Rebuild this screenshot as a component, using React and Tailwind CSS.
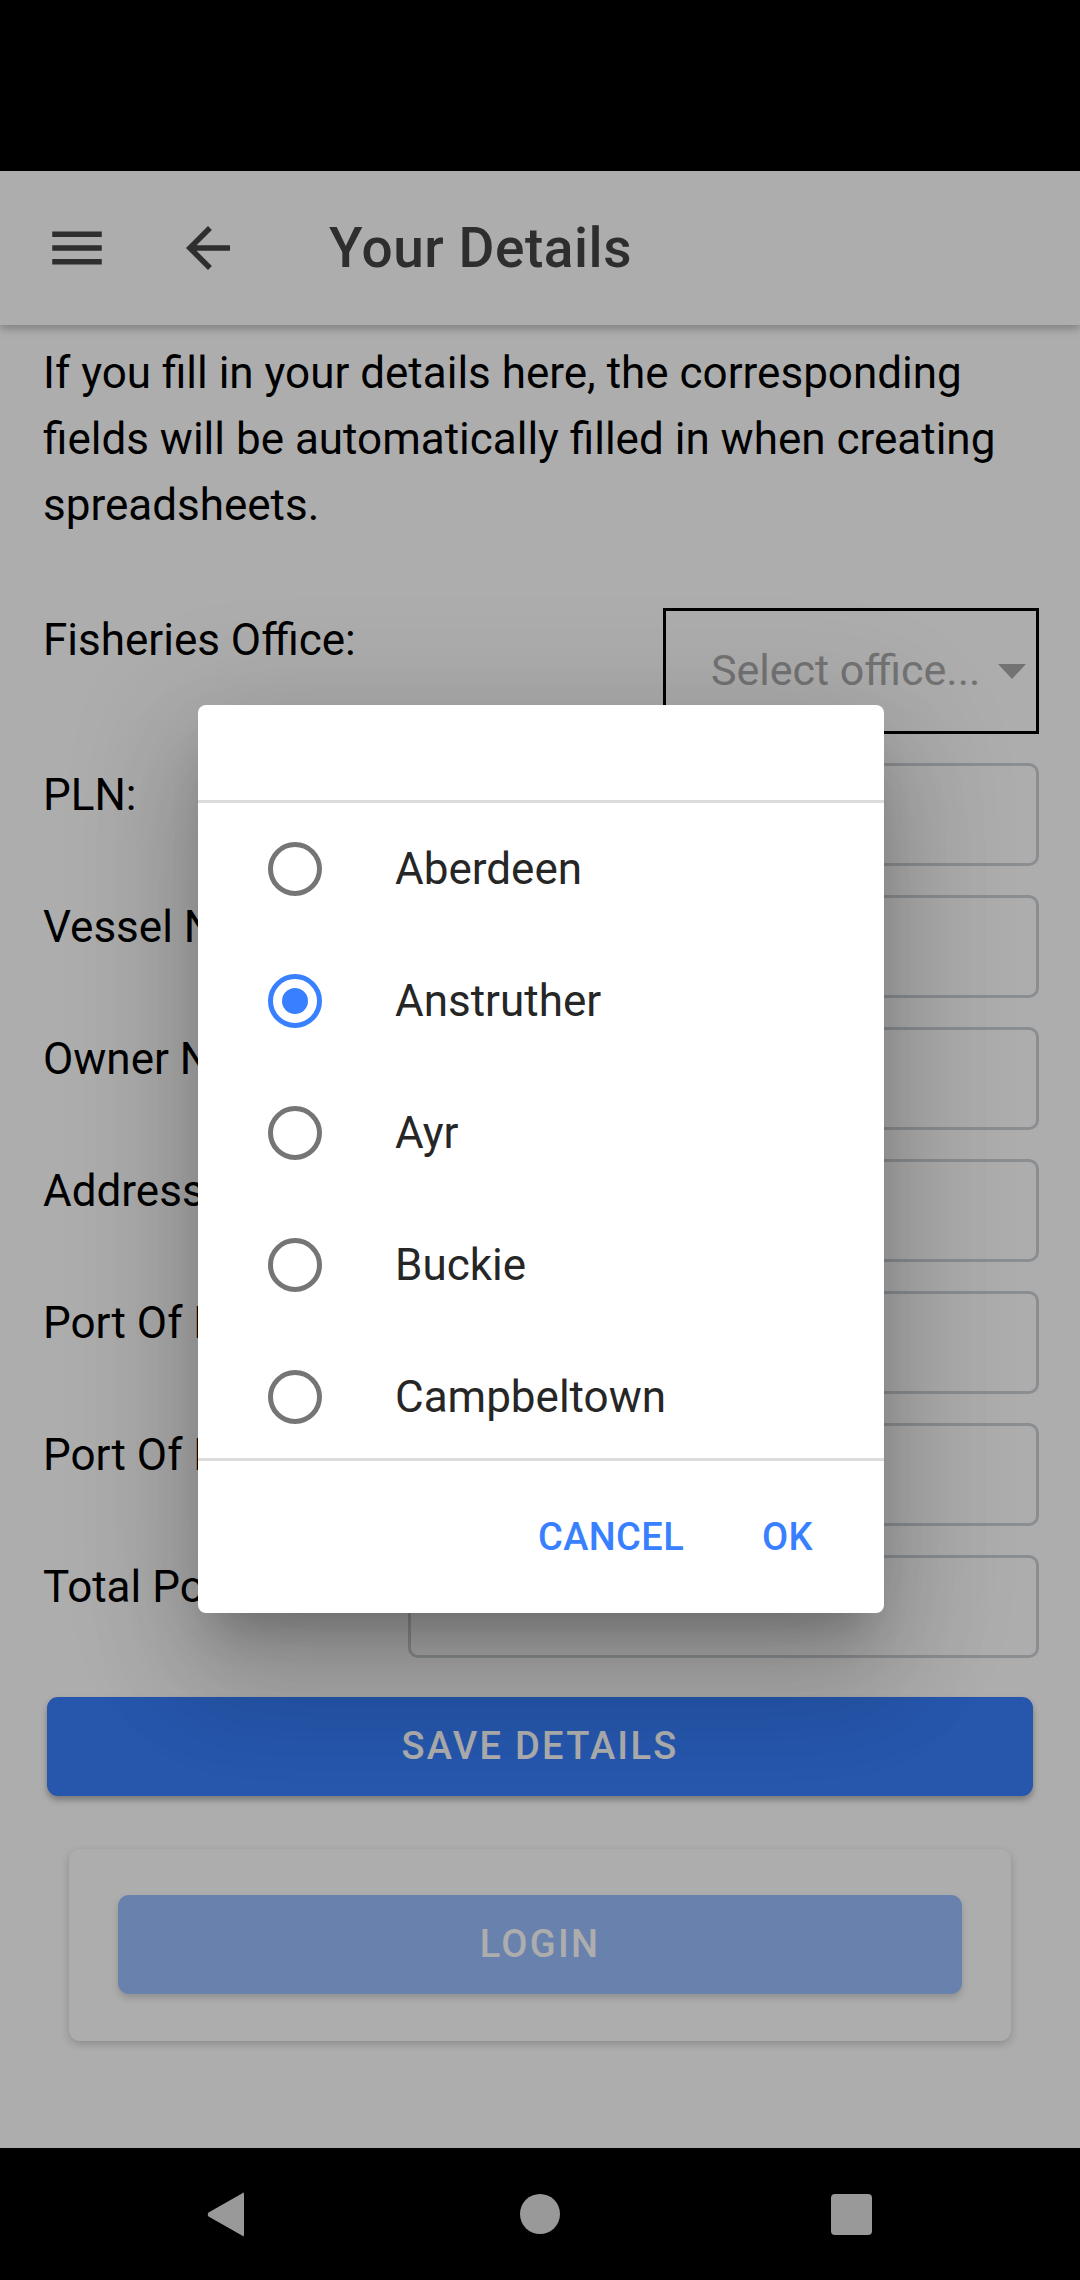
import React from 'react';

const offices = [
    { name: 'Aberdeen', checked: false },
    { name: 'Anstruther', checked: true },
    { name: 'Ayr', checked: false },
    { name: 'Buckie', checked: false },
    { name: 'Campbeltown', checked: false },
    { name: 'Eyemouth', checked: false },
];

const fields = ['PLN:', 'Vessel Name:', 'Owner Name:', 'Address:', 'Port Of Registry:', 'Port Of Landing:', 'Total Pots:'];

const Radio = ({ checked }) => {
    if (checked) {
        return (
            <span className="w-[54px] h-[54px] shrink-0 rounded-full border-[5px] border-[#3880ff] flex items-center justify-center">
                <span className="w-[26px] h-[26px] rounded-full bg-[#3880ff]" />
            </span>
        );
    }
    return <span className="w-[54px] h-[54px] shrink-0 rounded-full border-[5px] border-[#757575]" />;
};

const App = () => {
    return (
        <div className="relative w-[1080px] h-[2280px] overflow-hidden flex flex-col bg-white font-[Roboto,sans-serif]">
            {/* Status bar */}
            <div className="h-[171px] shrink-0 bg-black" />

            {/* Toolbar */}
            <header className="h-[154px] shrink-0 flex items-center pl-[44px] bg-white text-[#444] shadow-[0_4px_8px_rgba(0,0,0,0.25)] relative z-10">
                <svg viewBox="0 0 24 24" className="w-[66px] h-[66px]" fill="currentColor">
                    <path d="M3 18h18v-2H3v2zm0-5h18v-2H3v2zm0-7v2h18V6H3z" />
                </svg>
                <svg viewBox="0 0 24 24" className="w-[66px] h-[66px] ml-[65px]" fill="currentColor">
                    <path d="M20 11H7.83l5.59-5.59L12 4l-8 8 8 8 1.41-1.41L7.83 13H20v-2z" />
                </svg>
                <h1 className="ml-[88px] text-[55px] font-medium tracking-[0.01em]">Your Details</h1>
            </header>

            {/* Content */}
            <main className="flex-1 pl-[43px] pr-[41px] pt-[15px] text-black">
                <p className="text-[44px] leading-[66px] pr-[2px]">
                    If you fill in your details here, the corresponding fields will be automatically filled in when creating spreadsheets.
                </p>

                <div className="mt-[70px] flex flex-col gap-[29px]">
                    <div className="flex items-start">
                        <span className="flex-1 text-[44px] leading-[64px]">Fisheries Office:</span>
                        <div className="w-[376px] h-[126px] border-[3px] border-black flex items-center pl-[45px] pr-[10px] text-[#aaa]">
                            <span className="flex-1 text-[43px] pb-[2px]">Select office...</span>
                            <svg viewBox="0 0 28 15" className="w-[28px] h-[15px]" fill="currentColor">
                                <path d="M0 0h28L14 15z" />
                            </svg>
                        </div>
                    </div>
                    {fields.map(label => (
                        <div key={label} className="flex items-start">
                            <span className="w-[365px] shrink-0 whitespace-nowrap text-[44px] leading-[64px]">{label}</span>
                            <div className="flex-1 h-[103px] border-[3px] border-[#cdd1d6] rounded-[10px]" />
                        </div>
                    ))}
                </div>

                <button className="mt-[39px] ml-[4px] w-[986px] h-[99px] rounded-[11px] bg-[#3880ff] text-white text-[38px] font-medium tracking-[0.06em] shadow-[0_4px_6px_rgba(0,0,0,0.3)]">
                    SAVE DETAILS
                </button>

                <div className="mt-[53px] ml-[26px] w-[942px] rounded-[11px] bg-white shadow-[0_3px_8px_rgba(0,0,0,0.2)] px-[49px] pt-[46px] pb-[47px]">
                    <button className="w-full h-[99px] rounded-[11px] bg-[#3880ff] text-white text-[38px] font-medium tracking-[0.06em] opacity-50 shadow-[0_4px_6px_rgba(0,0,0,0.3)]">
                        LOGIN
                    </button>
                </div>
            </main>

            {/* Navigation bar */}
            <nav className="h-[132px] shrink-0 bg-black flex items-center text-[#999]">
                <svg viewBox="0 0 37 45" className="w-[37px] h-[45px] ml-[207px]" fill="currentColor">
                    <path d="M35 1.5 Q37 -1 37 3 V42 Q37 46 35 43.5 L1.5 24.5 Q0 22.5 1.5 20.5 Z" />
                </svg>
                <span className="ml-[276px] w-[40px] h-[40px] rounded-full bg-[#999]" />
                <span className="ml-[271px] w-[41px] h-[41px] rounded-[4px] bg-[#999]" />
            </nav>

            {/* Backdrop */}
            <div className="absolute left-0 right-0 top-[171px] bottom-[132px] bg-black/[0.32] z-20" />

            {/* Alert dialog */}
            <div className="absolute left-[198px] top-[705px] w-[686px] h-[908px] z-30 bg-white rounded-[8px] overflow-hidden flex flex-col shadow-[0_30px_40px_-18px_rgba(0,0,0,0.2),0_66px_104px_8px_rgba(0,0,0,0.14),0_25px_126px_22px_rgba(0,0,0,0.12)]">
                <div className="h-[98px] shrink-0 border-b-[3px] border-[#dcdcdc]" />
                <div className="h-[655px] shrink-0 overflow-hidden">
                    {offices.map(o => (
                        <div key={o.name} className="h-[132px] flex items-center pl-[70px]">
                            <Radio checked={o.checked} />
                            <span className="ml-[73px] text-[44px] text-[#262626]">{o.name}</span>
                        </div>
                    ))}
                </div>
                <div className="flex-1 border-t-[3px] border-[#dcdcdc] flex items-center justify-end pr-[71px] gap-[78px] text-[#3880ff] text-[38px] font-medium tracking-[0.01em]">
                    <span>CANCEL</span>
                    <span>OK</span>
                </div>
            </div>
        </div>
    );
};

export default App;
